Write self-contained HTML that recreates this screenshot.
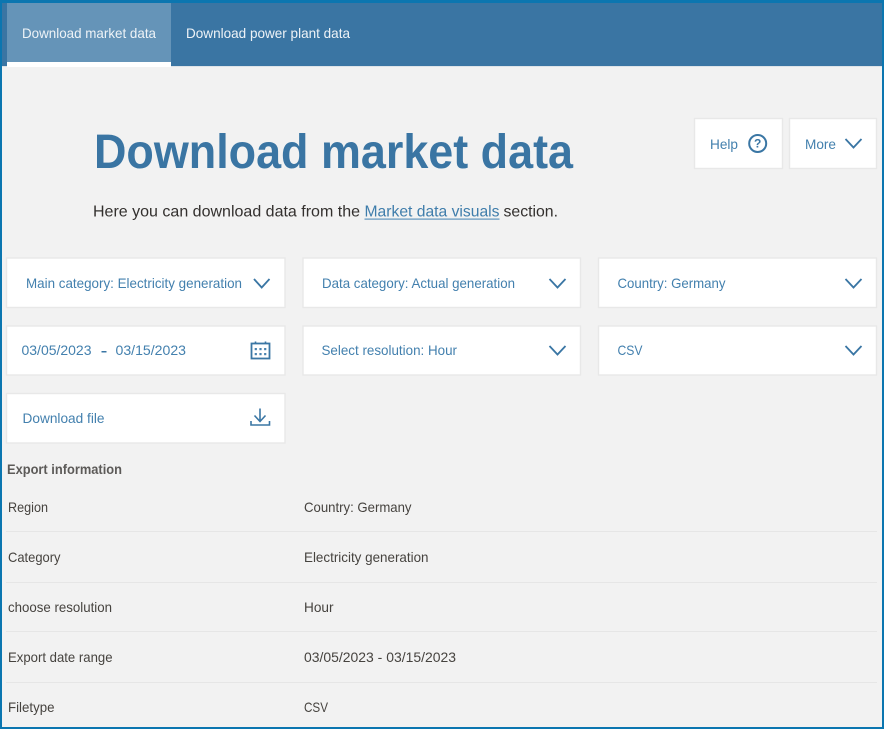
<!DOCTYPE html>
<html lang="en">
<head>
<meta charset="utf-8">
<title>Download market data</title>
<style>
html,body{margin:0;padding:0;width:884px;height:729px;overflow:hidden;background:#f2f2f2}
svg{display:block;position:absolute;left:0;top:0}
text{font-family:"Liberation Sans",sans-serif}
.b{fill:#4380ae;font-size:14px}
.r{fill:#46433f;font-size:14px}
.n{fill:#eef3f7;font-size:14px}
.box{fill:#fff;stroke:#e8e8e8;stroke-width:1.4}
.ch{fill:none;stroke:#3a76a4;stroke-width:1.8}
.ln{stroke:#e6e6e6;stroke-width:1}
</style>
</head>
<body>
<svg width="884" height="729" viewBox="0 0 884 729" xmlns="http://www.w3.org/2000/svg">
<rect x="0" y="0" width="884" height="729" fill="#f2f2f2"/>
<rect x="2" y="3" width="880" height="63" fill="#3a75a3"/>
<rect x="2" y="66" width="880" height="1" fill="#dde3e8"/>
<rect x="7" y="3" width="164" height="59" fill="#6594b8"/>
<rect x="7" y="62" width="164" height="5" fill="#fff"/>
<text class="n" x="22" y="38" textLength="134" lengthAdjust="spacingAndGlyphs">Download market data</text>
<text class="n" x="186" y="38" textLength="164" lengthAdjust="spacingAndGlyphs">Download power plant data</text>

<text x="94" y="168" font-size="48" font-weight="700" fill="#3a75a3" textLength="479" lengthAdjust="spacingAndGlyphs">Download market data</text>
<text x="93" y="216.5" font-size="16" fill="#33302e" textLength="267" lengthAdjust="spacingAndGlyphs">Here you can download data from the</text>
<text x="364.5" y="216.5" font-size="16" fill="#3f7dab" textLength="135" lengthAdjust="spacingAndGlyphs">Market data visuals</text>
<rect x="364.5" y="218.5" width="135" height="1.2" fill="#5f95bd"/>
<text x="503.5" y="216.5" font-size="16" fill="#33302e" textLength="54.5" lengthAdjust="spacingAndGlyphs">section.</text>

<rect class="box" x="694.5" y="118.5" width="88" height="50"/>
<rect class="box" x="789.5" y="118.5" width="87" height="50"/>
<text class="b" x="710" y="149" textLength="28" lengthAdjust="spacingAndGlyphs">Help</text>
<circle cx="757.7" cy="143.5" r="8.5" fill="none" stroke="#3a76a4" stroke-width="2"/>
<text x="757.7" y="147.5" font-size="12" font-weight="700" fill="#3a76a4" text-anchor="middle">?</text>
<text class="b" x="805" y="149" textLength="31" lengthAdjust="spacingAndGlyphs">More</text>
<path class="ch" d="M845.5 139L853.5 147.5L861.5 139"/>

<rect class="box" x="6.5" y="258" width="278.5" height="49.5"/>
<rect class="box" x="303" y="258" width="277.5" height="49.5"/>
<rect class="box" x="598.5" y="258" width="278" height="49.5"/>
<rect class="box" x="6.5" y="326" width="278.5" height="49"/>
<rect class="box" x="303" y="326" width="277.5" height="49"/>
<rect class="box" x="598.5" y="326" width="278" height="49"/>
<rect class="box" x="6.5" y="393.5" width="278.5" height="49.5"/>

<text class="b" x="26" y="288" textLength="216" lengthAdjust="spacingAndGlyphs">Main category: Electricity generation</text>
<path class="ch" d="M254 279L261.7 287.5L269.5 279"/>
<text class="b" x="322" y="288" textLength="193" lengthAdjust="spacingAndGlyphs">Data category: Actual generation</text>
<path class="ch" d="M549.5 279L557.5 287.5L565.5 279"/>
<text class="b" x="617.5" y="288" textLength="108" lengthAdjust="spacingAndGlyphs">Country: Germany</text>
<path class="ch" d="M845.5 279L853.5 287.5L861.5 279"/>

<text class="b" x="21.5" y="355" textLength="70" lengthAdjust="spacingAndGlyphs">03/05/2023</text>
<rect x="101.5" y="351" width="5" height="1.5" fill="#3a76a4"/>
<text class="b" x="115.5" y="355" textLength="70.5" lengthAdjust="spacingAndGlyphs">03/15/2023</text>
<g fill="none" stroke="#3a76a4">
<rect x="251.5" y="343.5" width="18" height="15" stroke-width="1.8"/>
<path d="M255.5 341.5v2M265.5 341.5v2" stroke-width="1.6"/>
</g>
<g fill="#4a83af">
<rect x="254.7" y="348" width="2.2" height="2.2"/><rect x="259.4" y="348" width="2.2" height="2.2"/><rect x="264.1" y="348" width="2.2" height="2.2"/>
<rect x="254.7" y="353" width="2.2" height="2.2"/><rect x="259.4" y="353" width="2.2" height="2.2"/><rect x="264.1" y="353" width="2.2" height="2.2"/>
</g>
<text class="b" x="321.5" y="355" textLength="135.5" lengthAdjust="spacingAndGlyphs">Select resolution: Hour</text>
<path class="ch" d="M549.5 346L557.5 354.5L565.5 346"/>
<text class="b" x="617.5" y="355" textLength="25" lengthAdjust="spacingAndGlyphs">CSV</text>
<path class="ch" d="M845.5 346L853.5 354.5L861.5 346"/>

<text class="b" x="22.5" y="423" textLength="82" lengthAdjust="spacingAndGlyphs">Download file</text>
<path fill="none" stroke="#3a76a4" stroke-width="1.6" d="M260 408.5V421M254.5 415.5L260 421.5L265.5 415.5M251 421V425H269.5V421"/>

<text x="7" y="474" font-size="14" font-weight="700" fill="#5c5a58" textLength="115" lengthAdjust="spacingAndGlyphs">Export information</text>
<text class="r" x="8" y="512" textLength="40" lengthAdjust="spacingAndGlyphs">Region</text>
<text class="r" x="304" y="512" textLength="107.5" lengthAdjust="spacingAndGlyphs">Country: Germany</text>
<path class="ln" d="M6 531.5H877"/>
<text class="r" x="8" y="562" textLength="52.5" lengthAdjust="spacingAndGlyphs">Category</text>
<text class="r" x="304" y="562" textLength="124.5" lengthAdjust="spacingAndGlyphs">Electricity generation</text>
<path class="ln" d="M6 582.5H877"/>
<text class="r" x="8" y="612" textLength="104" lengthAdjust="spacingAndGlyphs">choose resolution</text>
<text class="r" x="304" y="612" textLength="29.5" lengthAdjust="spacingAndGlyphs">Hour</text>
<path class="ln" d="M6 631.5H877"/>
<text class="r" x="8" y="662" textLength="104.5" lengthAdjust="spacingAndGlyphs">Export date range</text>
<text class="r" x="304" y="662" textLength="152" lengthAdjust="spacingAndGlyphs">03/05/2023 - 03/15/2023</text>
<path class="ln" d="M6 682.5H877"/>
<text class="r" x="8" y="712" textLength="46.5" lengthAdjust="spacingAndGlyphs">Filetype</text>
<text class="r" x="304" y="712" textLength="24" lengthAdjust="spacingAndGlyphs">CSV</text>

<rect x="0" y="0" width="884" height="3" fill="#0b76b0"/>
<rect x="0" y="0" width="2" height="729" fill="#0b76b0"/>
<rect x="882" y="0" width="2" height="729" fill="#0b76b0"/>
<rect x="0" y="727" width="884" height="2" fill="#0b76b0"/>
</svg>
</body>
</html>
